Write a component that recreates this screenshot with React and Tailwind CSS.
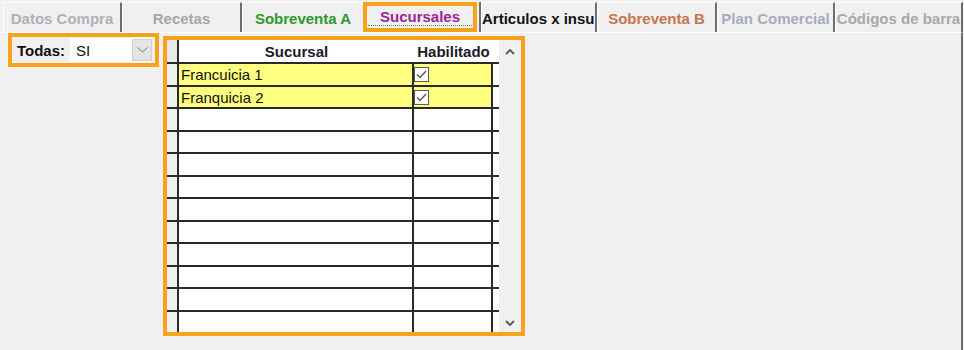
import React from "react";

function Check() {
  return (
    <div className="mt-[3px] w-[15px] h-[15px] border border-[#5a5a5a] bg-white flex items-center justify-center">
      <svg width="13" height="13" viewBox="0 0 13 13">
        <polyline points="2,6.5 5,9.5 11,3" fill="none" stroke="#5a5a5a" strokeWidth="1.4" />
      </svg>
    </div>
  );
}

function Chevron({ up }) {
  return (
    <svg width="10" height="6" viewBox="0 0 10 6">
      <polyline
        points={up ? "1,5 5,1 9,5" : "1,1 5,5 9,1"}
        fill="none"
        stroke="#606060"
        strokeWidth="2"
      />
    </svg>
  );
}

const rows = [
  { name: "Francuicia 1", check: true, h: "h-[23px]" },
  { name: "Franquicia 2", check: true, h: "h-[22px]" },
  { name: "", h: "h-[23px]" },
  { name: "", h: "h-[22px]" },
  { name: "", h: "h-[23px]" },
  { name: "", h: "h-[22px]" },
  { name: "", h: "h-[23px]" },
  { name: "", h: "h-[22px]" },
  { name: "", h: "h-[23px]" },
  { name: "", h: "h-[22px]" },
  { name: "", h: "h-[23px]" },
  { name: "", h: "h-[22px]" },
];

export default function App() {
  return (
    <div className="w-[964px] h-[350px] bg-[#f0f0f0] overflow-hidden font-['Liberation_Sans',Arial,sans-serif] text-[15px] leading-[17px]">
      {/* Tabs */}
      <div className="flex pl-[3px] pt-[2px] h-[32px]">
        <div className="w-[119px] h-[30px] border-t border-l border-white border-r-2 border-r-[#6e6e6e] pt-[7px] text-center whitespace-nowrap overflow-hidden font-bold text-[#adb1ba]">
          Datos Compra
        </div>
        <div className="w-[120px] h-[30px] border-t border-l border-white border-r-2 border-r-[#6e6e6e] pt-[7px] text-center whitespace-nowrap overflow-hidden font-bold text-[#a7a7a7]">
          Recetas
        </div>
        <div className="w-[121px] h-[30px] border-t border-l border-white pt-[7px] text-center whitespace-nowrap overflow-hidden font-bold text-[#2b9b2b]">
          Sobreventa A
        </div>
        <div className="w-[118px] h-[30px] border-r-2 border-r-[#6e6e6e] flex">
          <div className="w-[114px] h-[30px] border-4 border-[#f8a31b] px-[1px] pt-[2px]">
            <div className="h-[18px] border-b border-dotted border-[#3a9a3a] text-center font-bold text-[#9e22a0] whitespace-nowrap">
              Sucursales
            </div>
          </div>
        </div>
        <div className="w-[116px] h-[30px] border-t border-l border-white border-r-2 border-r-[#6e6e6e] pt-[7px] text-left whitespace-nowrap overflow-hidden font-bold text-[#121212]">
          Articulos x insu
        </div>
        <div className="w-[120px] h-[30px] border-t border-l border-white border-r-2 border-r-[#6e6e6e] pt-[7px] text-center whitespace-nowrap overflow-hidden font-bold text-[#c6764f]">
          Sobreventa B
        </div>
        <div className="w-[118px] h-[30px] border-t border-l border-white border-r-2 border-r-[#6e6e6e] pt-[7px] text-center whitespace-nowrap overflow-hidden font-bold text-[#a5adb9]">
          Plan Comercial
        </div>
        <div className="w-[128px] h-[30px] border-t border-l border-white border-r-2 border-r-[#6e6e6e] pt-[7px] text-center whitespace-nowrap overflow-hidden font-bold text-[#a8a8a8]">
          Códigos de barra
        </div>
      </div>

      {/* Panel */}
      <div className="w-[963px] h-[318px] border-t border-white border-r-2 border-r-[#6e6e6e] flex items-start pl-[8px] gap-[4px]">
        {/* Todas box */}
        <div className="w-[151px] h-[34px] border-4 border-[#f8a31b] flex items-center pl-[5px] gap-[5px]">
          <span className="font-bold text-[#111]">Todas:</span>
          <div className="w-[82px] h-[24px] bg-white flex items-stretch">
            <div className="flex-1 pl-[6px] flex items-center text-[#111]">SI</div>
            <div className="w-[20px] my-[1px] bg-[#e4e4e4] border border-[#cfcfcf] flex items-center justify-center">
              <svg width="11" height="6" viewBox="0 0 11 6">
                <polyline points="0.5,0.5 5.5,5 10.5,0.5" fill="none" stroke="#777" strokeWidth="1" />
              </svg>
            </div>
          </div>
        </div>

        {/* Grid box */}
        <div className="mt-[3px] w-[362px] h-[300px] border-4 border-[#f8a31b] flex overflow-hidden">
          <div className="w-[332px] flex flex-col">
            {/* header */}
            <div className="flex h-[24px] shrink-0 border-b-2 border-[#2a2a2a]">
              <div className="w-[12px] bg-[#e8e8e8] border-r-2 border-[#2a2a2a]"></div>
              <div className="w-[235px] bg-white flex items-center justify-center font-bold text-[#1a1a28]">
                Sucursal
              </div>
              <div className="w-[79px] bg-white flex items-center justify-center font-bold text-[#1a1a28]">
                Habilitado
              </div>
              <div className="w-[6px] bg-white"></div>
            </div>
            {rows.map((r, i) => (
              <div key={i} className={`flex shrink-0 border-b-2 border-[#2a2a2a] ${r.h}`}>
                <div className="w-[12px] bg-[#f0f0f0] border-r-2 border-[#2a2a2a]"></div>
                <div
                  className={`w-[235px] border-r-2 border-[#2a2a2a] pl-[2px] flex items-center text-[#111] ${
                    r.check ? "bg-[#ffff80]" : "bg-white"
                  }`}
                >
                  {r.name}
                </div>
                <div
                  className={`w-[79px] border-r-2 border-[#2a2a2a] ${
                    r.check ? "bg-[#ffff80]" : "bg-white"
                  }`}
                >
                  {r.check && <Check />}
                </div>
                <div className="w-[6px] bg-white"></div>
              </div>
            ))}
          </div>
          {/* scrollbar */}
          <div className="w-[22px] bg-[#f0f0f0] flex flex-col items-center justify-between pt-[9px] pb-[6px]">
            <Chevron up />
            <Chevron />
          </div>
        </div>
      </div>
    </div>
  );
}
